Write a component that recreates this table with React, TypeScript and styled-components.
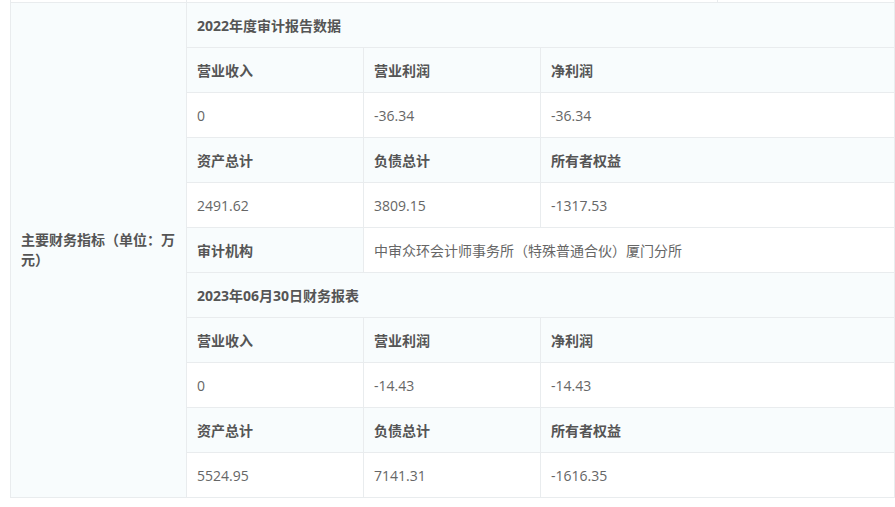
import React from "react";
import styled, { createGlobalStyle } from "styled-components";

const GlobalStyle = createGlobalStyle`
  html, body { margin: 0; padding: 0; background: #fff; }
  body {
    font-family: "Open Sans", "Noto Sans CJK SC", sans-serif;
    font-size: 14px;
    color: #666;
  }
  * { box-sizing: border-box; }
`;

const BORDER = "#e9ecee";
const TINT = "#f8fcfd";

const Page = styled.div`
  width: 895px;
  padding-left: 10px;
`;

const PrevRow = styled.div`
  display: grid;
  grid-template-columns: 176px 531px 1fr;
  height: 2px;
  overflow: hidden;
  border-left: 1px solid ${BORDER};
  border-right: 1px solid ${BORDER};
`;

const PrevCell = styled.div<{ $last?: boolean }>`
  border-right: ${(p) => (p.$last ? "none" : `1px solid ${BORDER}`)};
  background: #fff;
`;

const Table = styled.div`
  display: grid;
  grid-template-columns: 176px 1fr;
  border: 1px solid ${BORDER};
`;

const LabelCell = styled.div`
  background: ${TINT};
  border-right: 1px solid ${BORDER};
  display: flex;
  align-items: center;
  padding: 0 10px;
  font-weight: bold;
  color: #555;
  line-height: 20px;
`;

const Inner = styled.div`
  display: grid;
  grid-template-columns: 177px 177px 1fr;
  grid-template-rows: 44px;
  grid-auto-rows: 45px;
`;

const Cell = styled.div<{
  $span?: number;
  $head?: boolean;
  $divider?: boolean;
  $first?: boolean;
}>`
  grid-column: span ${(p) => p.$span ?? 1};
  display: flex;
  align-items: center;
  padding: 0 10px;
  white-space: nowrap;
  background: ${(p) => (p.$head ? TINT : "#fff")};
  font-weight: ${(p) => (p.$head ? "bold" : "normal")};
  color: ${(p) => (p.$head ? "#555" : "#666")};
  border-top: ${(p) => (p.$first ? "none" : `1px solid ${BORDER}`)};
  border-right: ${(p) => (p.$divider ? `1px solid ${BORDER}` : "none")};
`;

type Row =
  | { kind: "title"; text: string }
  | { kind: "triple"; head: boolean; cells: [string, string, string] }
  | { kind: "pair"; label: string; value: string };

const rows: Row[] = [
  { kind: "title", text: "2022年度审计报告数据" },
  { kind: "triple", head: true, cells: ["营业收入", "营业利润", "净利润"] },
  { kind: "triple", head: false, cells: ["0", "-36.34", "-36.34"] },
  { kind: "triple", head: true, cells: ["资产总计", "负债总计", "所有者权益"] },
  { kind: "triple", head: false, cells: ["2491.62", "3809.15", "-1317.53"] },
  { kind: "pair", label: "审计机构", value: "中审众环会计师事务所（特殊普通合伙）厦门分所" },
  { kind: "title", text: "2023年06月30日财务报表" },
  { kind: "triple", head: true, cells: ["营业收入", "营业利润", "净利润"] },
  { kind: "triple", head: false, cells: ["0", "-14.43", "-14.43"] },
  { kind: "triple", head: true, cells: ["资产总计", "负债总计", "所有者权益"] },
  { kind: "triple", head: false, cells: ["5524.95", "7141.31", "-1616.35"] },
];

export default function App() {
  return (
    <>
      <GlobalStyle />
      <Page>
        <PrevRow>
          <PrevCell />
          <PrevCell />
          <PrevCell $last />
        </PrevRow>
        <Table>
          <LabelCell>主要财务指标（单位：万元）</LabelCell>
          <Inner>
            {rows.map((r, i) => {
              const first = i === 0;
              if (r.kind === "title") {
                return (
                  <Cell key={i} $span={3} $head $first={first}>
                    {r.text}
                  </Cell>
                );
              }
              if (r.kind === "pair") {
                return (
                  <React.Fragment key={i}>
                    <Cell $head $divider $first={first}>
                      {r.label}
                    </Cell>
                    <Cell $span={2} $first={first}>
                      {r.value}
                    </Cell>
                  </React.Fragment>
                );
              }
              return (
                <React.Fragment key={i}>
                  {r.cells.map((c, j) => (
                    <Cell key={j} $head={r.head} $divider={j < 2} $first={first}>
                      {c}
                    </Cell>
                  ))}
                </React.Fragment>
              );
            })}
          </Inner>
        </Table>
      </Page>
    </>
  );
}
